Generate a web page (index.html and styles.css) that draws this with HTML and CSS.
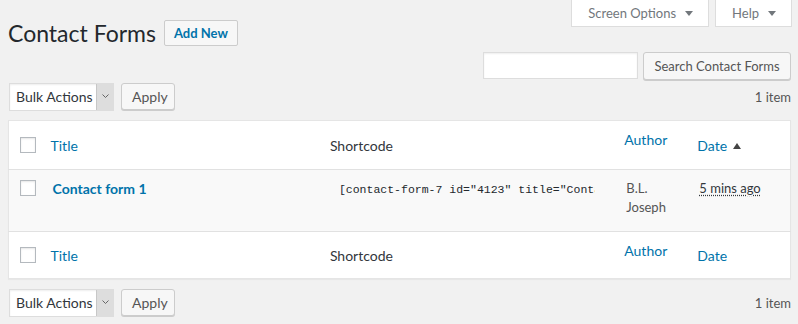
FILE: index.html
```html
<!DOCTYPE html>
<html lang="en">
<head>
    <meta charset="UTF-8">
    <title>Contact Forms</title>
    <link rel="stylesheet" href="styles.css">
</head>
<body>
    <div class="wrap">
        <div class="top">
            <div class="heading">
                <h1>Contact Forms</h1>
                <a class="page-title-action" href="#">Add New</a>
            </div>
            <div class="screen-meta-links">
                <button class="meta-tab">Screen Options <span class="tab-arrow"></span></button>
                <button class="meta-tab">Help <span class="tab-arrow"></span></button>
            </div>
        </div>

        <div class="search-box">
            <input type="search" class="search-input">
            <button class="button">Search Contact Forms</button>
        </div>

        <div class="tablenav">
            <div class="actions">
                <div class="select">
                    <span class="select-label">Bulk Actions</span>
                    <span class="select-arrow"><svg width="9" height="6" viewBox="0 0 9 6"><path d="M1.5 1.5 L4.5 4.5 L7.5 1.5" fill="none" stroke="#666" stroke-width="1"/></svg></span>
                </div>
                <button class="button apply">Apply</button>
            </div>
            <span class="displaying-num">1 item</span>
        </div>

        <table class="list-table">
            <colgroup>
                <col class="col-cb">
                <col class="col-title">
                <col class="col-shortcode">
                <col class="col-author">
                <col class="col-date">
            </colgroup>
            <thead>
                <tr>
                    <th class="check-column"><input type="checkbox"></th>
                    <th class="th-title"><a href="#">Title</a></th>
                    <th class="th-shortcode">Shortcode</th>
                    <th class="th-author"><a href="#">Author</a></th>
                    <th class="th-date"><a href="#">Date <span class="sort-arrow"></span></a></th>
                </tr>
            </thead>
            <tbody>
                <tr>
                    <td class="check-column"><input type="checkbox"></td>
                    <td class="td-title"><a class="row-title" href="#">Contact form 1</a></td>
                    <td class="td-shortcode"><input type="text" class="code" readonly value='[contact-form-7 id="4123" title="Contact form 1"]'></td>
                    <td class="td-author">B.L.<br>Joseph</td>
                    <td class="td-date"><abbr title="2018/01/01">5 mins ago</abbr></td>
                </tr>
            </tbody>
            <tfoot>
                <tr>
                    <th class="check-column"><input type="checkbox"></th>
                    <th class="th-title"><a href="#">Title</a></th>
                    <th class="th-shortcode">Shortcode</th>
                    <th class="th-author"><a href="#">Author</a></th>
                    <th class="th-date"><a href="#">Date</a></th>
                </tr>
            </tfoot>
        </table>

        <div class="tablenav bottom">
            <div class="actions">
                <div class="select">
                    <span class="select-label">Bulk Actions</span>
                    <span class="select-arrow"><svg width="9" height="6" viewBox="0 0 9 6"><path d="M1.5 1.5 L4.5 4.5 L7.5 1.5" fill="none" stroke="#666" stroke-width="1"/></svg></span>
                </div>
                <button class="button apply">Apply</button>
            </div>
            <span class="displaying-num">1 item</span>
        </div>
    </div>
</body>
</html>
```

FILE: styles.css
```css
:root {
    --bg: #f1f1f1;
    --text: #32373c;
    --muted: #555;
    --link: #0073aa;
    --border: #e5e5e5;
    --font: 'Lato', 'Open Sans', sans-serif;
}

* {
    margin: 0;
    padding: 0;
    box-sizing: border-box;
}

body {
    background: var(--bg);
    color: var(--text);
    font-family: var(--font);
    font-size: 13px;
}

a {
    color: var(--link);
    text-decoration: none;
}

.wrap {
    padding: 0 7px 0 8px;
}

/* Header */
.top {
    display: flex;
    justify-content: space-between;
    align-items: flex-start;
}

.heading {
    display: flex;
    align-items: flex-start;
    gap: 8px;
    padding-top: 19px;
}

h1 {
    font-size: 23px;
    font-weight: 400;
    line-height: 29px;
    color: #23282d;
}

.page-title-action {
    margin-top: 1px;
    height: 26px;
    line-height: 24px;
    padding: 0 9px;
    border: 1px solid #ccc;
    border-radius: 2px;
    background: #f7f7f7;
    font-size: 13px;
    font-weight: 700;
}

.screen-meta-links {
    display: flex;
    gap: 6px;
    margin-right: -1px;
}

.meta-tab {
    height: 27px;
    padding: 0 15px 0 16px;
    border: 1px solid #ddd;
    border-top: none;
    background: #fff;
    color: #72777c;
    font-family: var(--font);
    font-size: 13px;
    display: flex;
    align-items: center;
    gap: 9px;
}

.tab-arrow {
    width: 0;
    height: 0;
    border-left: 4px solid transparent;
    border-right: 4px solid transparent;
    border-top: 5px solid #72777c;
}

/* Search */
.search-box {
    display: flex;
    justify-content: flex-end;
    gap: 5px;
    margin-top: 4px;
}

.search-input {
    width: 155px;
    height: 27px;
    border: 1px solid #ddd;
    background: #fff;
    box-shadow: inset 0 1px 2px rgba(0, 0, 0, 0.07);
}

.button {
    height: 28px;
    padding: 0 10px;
    border: 1px solid #ccc;
    border-radius: 3px;
    background: #f7f7f7;
    box-shadow: 0 1px 0 #ccc;
    color: var(--muted);
    font-family: var(--font);
    font-size: 13px;
}

.search-box .button {
    width: 148px;
}

/* Table nav */
.tablenav {
    display: flex;
    justify-content: space-between;
    align-items: center;
    margin-top: 3px;
    height: 28px;
}

.tablenav.bottom {
    margin-top: 10px;
}

.actions {
    display: flex;
    align-items: flex-start;
    gap: 7px;
    padding-left: 1px;
}

.select {
    display: flex;
    width: 105px;
    height: 28px;
    border: 1px solid #ddd;
    background: #fff;
    box-shadow: inset 0 1px 2px rgba(0, 0, 0, 0.07);
}

.select-label {
    flex: 1;
    padding-left: 6px;
    line-height: 26px;
    font-size: 14px;
    color: #32373c;
}

.select-arrow {
    width: 17px;
    background: #ddd;
    border-left: 1px solid #c7c7c7;
    display: flex;
    justify-content: center;
    padding-top: 9px;
}

.button.apply {
    width: 54px;
    height: 27px;
    font-size: 14px;
}

.displaying-num {
    color: var(--muted);
    font-size: 13px;
}

/* List table */
.list-table {
    width: 100%;
    margin-top: 9px;
    border: 1px solid var(--border);
    border-collapse: collapse;
    table-layout: fixed;
    background: #fff;
    box-shadow: 0 1px 1px rgba(0, 0, 0, 0.04);
    font-size: 14px;
}

.col-cb { width: 33px; }
.col-title { width: 278px; }
.col-shortcode { width: 296px; }
.col-author { width: 73px; }
.col-date { width: 101px; }

th {
    text-align: left;
    font-weight: 400;
    line-height: 19px;
    height: 49px;
    vertical-align: middle;
}

thead th {
    border-bottom: 1px solid #e1e1e1;
}

tfoot th {
    border-top: 1px solid #e1e1e1;
    height: 47px;
}

.check-column {
    padding-left: 11px;
}

input[type="checkbox"] {
    appearance: none;
    display: block;
    width: 16px;
    height: 16px;
    border: 1px solid #b4b9be;
    background: #fff;
    box-shadow: inset 0 1px 2px rgba(0, 0, 0, 0.1);
}

.th-title { padding-left: 9px; }
.th-shortcode { padding-left: 10px; }

.th-author {
    vertical-align: top;
    padding: 9px 0 0 8px;
}

.th-date { padding-left: 8px; }

.sort-arrow {
    display: inline-block;
    margin-left: 2px;
    vertical-align: 2px;
    width: 0;
    height: 0;
    border-left: 4px solid transparent;
    border-right: 4px solid transparent;
    border-bottom: 6px solid #444;
}

tbody tr {
    background: #f9f9f9;
}

td {
    vertical-align: top;
    height: 62px;
    line-height: 19px;
    padding-top: 9px;
}

td.check-column {
    padding-top: 10px;
}

.td-title {
    padding-left: 11px;
}

.row-title {
    font-weight: 700;
    font-size: 14px;
}

.td-shortcode {
    padding-left: 19px;
}

.code {
    display: block;
    width: 256px;
    height: 19px;
    padding: 0;
    border: none;
    background: transparent;
    outline: none;
    font-family: 'Liberation Mono', monospace;
    font-size: 11.5px;
    line-height: 19px;
    color: #23282d;
    margin-top: 1px;
}

.td-author {
    padding-left: 10px;
    color: var(--muted);
    font-size: 13px;
}

.td-date {
    padding-left: 10px;
    font-size: 13px;
}

abbr {
    text-decoration: underline dotted;
    text-underline-offset: 2px;
    color: var(--text);
}
```
